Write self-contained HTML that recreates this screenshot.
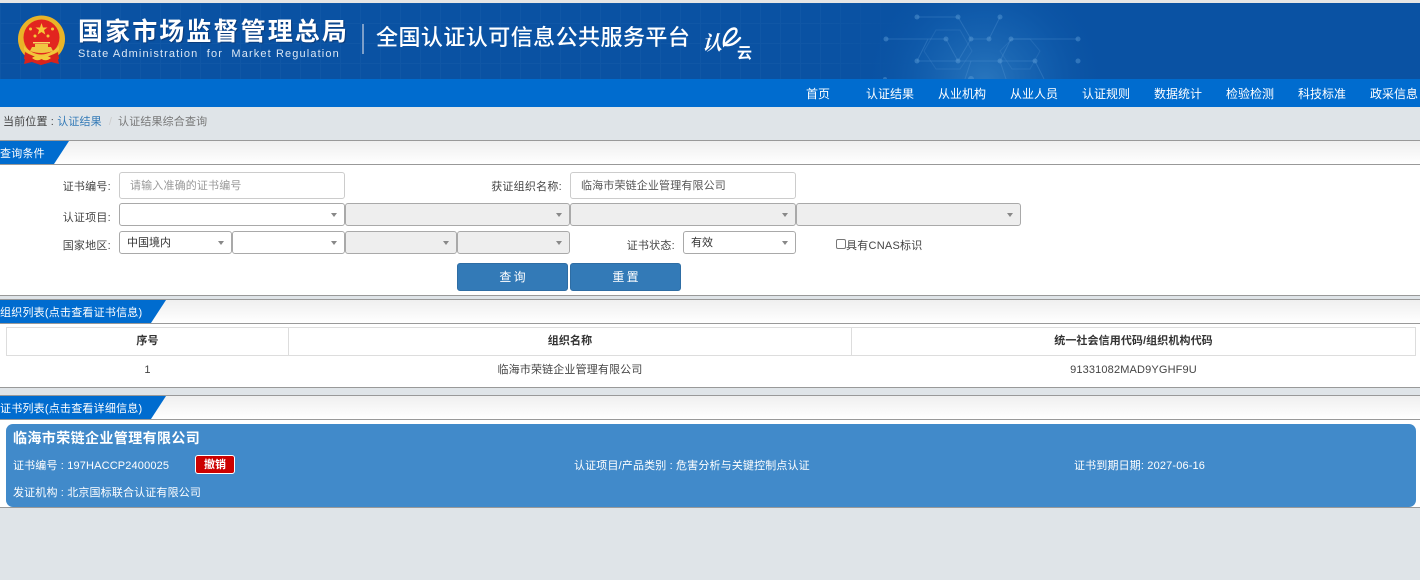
<!DOCTYPE html>
<html lang="zh"><head><meta charset="utf-8"><title>全国认证认可信息公共服务平台</title>
<style>
*{box-sizing:border-box}
html,body{margin:0;padding:0}
body{width:1420px;height:580px;overflow:hidden;position:relative;background:#dfe4e8;font:12px/16px "Liberation Sans","Noto Sans CJK SC",sans-serif;color:#333}
.a{position:absolute;white-space:nowrap}
.hdr{left:0;top:3px;width:1420px;height:76px;background:#0a52a3;overflow:hidden}
.top{left:0;top:0;width:1420px;height:3px;background:#e6e6e6}
.nav{left:0;top:79px;width:1420px;height:28px;background:#006ccf}
.n{top:86px;color:#fff;font-size:12px;line-height:16px;width:60px;text-align:center}
.panel{left:0;width:1420px;background:#fff;border-top:1px solid #999;border-bottom:1px solid #999}
.ttl{left:0;width:1420px;height:24px;background:linear-gradient(#efefef,#fff);border-bottom:1px solid #999}
.tag{left:0;height:23px;background:#006ccf;color:#fff;font-size:11px;letter-spacing:.22px;line-height:26px;clip-path:polygon(0 0,100% 0,calc(100% - 15px) 100%,0 100%)}
.l{font-size:11px;letter-spacing:.25px;color:#444;text-align:right}
.in{height:27px;background:#fff;border:1px solid #ccc;border-radius:3px;font-size:11px;letter-spacing:.15px;line-height:27px;padding-left:10px}
.s{height:23px;background:#fff;border:1px solid #a9a9a9;border-radius:3px;font-size:11px;line-height:22px;padding-left:7px;color:#333}
.s.d{background:#eee}
.s:after{content:"";position:absolute;right:7px;top:9px;border:3.500px solid transparent;border-top:4px solid #888;border-bottom:0}
.btn{height:28px;top:263px;width:111px;background:#337ab7;border:1px solid #2e6da4;border-radius:3px;color:#fff;text-align:center;line-height:27px;font-size:12px;word-spacing:-1px}
.th{top:327px;height:29px;border:1px solid #ddd;background:#fff;text-align:center;font-weight:bold;font-size:11px;letter-spacing:.1px;line-height:27px;color:#333}
.td{top:362px;text-align:center;font-size:11px;letter-spacing:.15px;color:#444}
.w{color:#fff;font-size:11px;letter-spacing:.15px}
</style></head><body>
<div class="a top"></div>
<div class="a hdr">
<svg width="1420" height="76" style="position:absolute;left:0;top:0">
<defs>
<pattern id="g" width="20" height="20" patternUnits="userSpaceOnUse"><path d="M0 .5H20M.5 0V20" stroke="#2a6cb5" stroke-opacity=".2" fill="none"/></pattern>
<radialGradient id="gl" cx="985" cy="80" r="125" gradientUnits="userSpaceOnUse"><stop offset="0" stop-color="#3f8fd0" stop-opacity=".6"/><stop offset=".55" stop-color="#1a6ab8" stop-opacity=".4"/><stop offset="1" stop-color="#0a52a3" stop-opacity="0"/></radialGradient>
<linearGradient id="fd" x1="0" x2="1" y1="0" y2="0"><stop offset="0" stop-color="#fff"/><stop offset=".58" stop-color="#fff"/><stop offset=".64" stop-color="#000"/></linearGradient>
<mask id="m"><rect width="1420" height="76" fill="url(#fd)"/></mask>
</defs>
<rect width="1420" height="76" fill="url(#g)" mask="url(#m)"/>
<rect width="1420" height="76" fill="url(#gl)"/>
<g fill="none" stroke="#5d9dd6" stroke-opacity=".3" stroke-width="1">
<path d="M917 14H958L971 36H989L1000 14M886 36H946M1011 36H1078M971 36L958 58H928M917 58L928 36M1000 14L989 36M1011 36L1000 58L1011 58H1035M971 58H958M1000 58H971"/>
<path d="M958 58L946 36M928 58L917 58M1035 58L1044 76M971 58L965 76M1000 58L1006 76"/>
<path d="M924 58L936 37H960L972 58L960 76H936Z" stroke-opacity=".2" transform="translate(0,-10)"/>
<path d="M1000 48L1012 36H1030L1040 48L1030 66H1012Z" stroke-opacity=".2"/>
</g>
<g fill="#5d9dd6" fill-opacity=".45"><circle cx="917" cy="14" r="2.500"/><circle cx="958" cy="14" r="2.500"/><circle cx="1000" cy="14" r="2.500"/><circle cx="886" cy="36" r="2.500"/><circle cx="946" cy="36" r="2.500"/><circle cx="971" cy="36" r="2.500"/><circle cx="989" cy="36" r="2.500"/><circle cx="1011" cy="36" r="2.500"/><circle cx="1078" cy="36" r="2.500"/><circle cx="917" cy="58" r="2.500"/><circle cx="958" cy="58" r="2.500"/><circle cx="971" cy="76" r="3"/><circle cx="1000" cy="58" r="2.500"/><circle cx="1035" cy="58" r="2.500"/><circle cx="1078" cy="58" r="2.500"/><circle cx="885" cy="76" r="2"/></g>
</svg>
</div>
<svg class="a" style="left:17px;top:15px" width="50" height="52" viewBox="0 0 50 52">
<path d="M10 36L7 49L15 47L24 50L34 47L42 49L39 36Z" fill="#d8231c"/>
<circle cx="24.500" cy="24" r="23.500" fill="#e9b428"/>
<circle cx="24.500" cy="22.500" r="18" fill="#e2251f"/>
<path d="M8 37Q24 47 41 37L42 44L34 47L24 50L15 47L7 44Z" fill="#d8231c"/>
<path d="M7 31Q24 48 42 31L42 35Q24 50 7 35Z" fill="#f2c53a"/>
<path d="M15 32H34L36 36Q24 40 13 36Z" fill="#f0c542"/><rect x="18" y="29" width="13" height="3" fill="#f0c542"/><rect x="16" y="27" width="17" height="1.500" fill="#f7d563"/>
<path d="M24.500 8L26 12.500H30.500L27 15L28.300 19.500L24.500 17L20.700 19.500L22 15L18.500 12.500H23Z" fill="#f6c836"/>
<g fill="#f6c836"><circle cx="13.500" cy="14" r="1.500"/><circle cx="35.500" cy="14" r="1.500"/><circle cx="18" cy="21" r="1.500"/><circle cx="31" cy="21" r="1.500"/></g>
<path d="M15 43Q20 39 24.500 42Q29 39 34 43Q29 47 24.500 44Q20 47 15 43Z" fill="#f4c93a"/>
</svg>
<div class="a" style="left:78px;top:15px;color:#fff;font-size:25px;line-height:34px;font-weight:bold;letter-spacing:2.100px;text-shadow:1px 1px 1px #0b3a78">国家市场监督管理总局</div>
<div class="a" style="left:78px;top:46px;color:#dbe7f4;font-size:11px;line-height:16px;letter-spacing:1.130px">State Administration&nbsp; for&nbsp; Market Regulation</div>
<div class="a" style="left:362px;top:24px;width:2px;height:30px;background:#7d9fc9"></div>
<div class="a" style="left:376px;top:22px;color:#fff;font-size:22px;line-height:32px;letter-spacing:.45px;font-weight:500">全国认证认可信息公共服务平台</div>
<div class="a" style="left:702px;top:31px;color:#fff;font-size:20px;line-height:26px;font-family:'Liberation Serif','Noto Serif CJK SC',serif;font-style:italic;font-weight:bold">认</div>
<svg class="a" style="left:722px;top:24px" width="30" height="24" viewBox="0 0 30 24"><path d="M2 21C1 14 6 5 12 4.500C16 4.500 15 10 10 14C7 17 3 20 2 21ZM3 21C9 22 14 19 18 14" fill="none" stroke="#fff" stroke-width="2.400" stroke-linecap="round"/></svg>
<div class="a" style="left:737px;top:45px;color:#fff;font-size:15px;line-height:17px;font-weight:bold">云</div>
<div class="a nav"></div>
<div class="a n" style="left:788px">首页</div><div class="a n" style="left:860px">认证结果</div><div class="a n" style="left:932px">从业机构</div><div class="a n" style="left:1004px">从业人员</div><div class="a n" style="left:1076px">认证规则</div><div class="a n" style="left:1148px">数据统计</div><div class="a n" style="left:1220px">检验检测</div><div class="a n" style="left:1292px">科技标准</div><div class="a n" style="left:1364px">政采信息</div>
<div class="a" style="left:3px;top:114px;font-size:11px;letter-spacing:.15px;color:#444">当前位置 : <span style="color:#337ab7">认证结果</span><span style="color:#ccc;margin:0 6px 0 7px">/</span><span style="color:#777">认证结果综合查询</span></div>

<div class="a panel" style="top:140px;height:156px"></div>
<div class="a ttl" style="top:141px"></div>
<div class="a tag" style="top:141px;width:69px">查询条件</div>
<div class="a l" style="left:40px;top:179px;width:71px">证书编号:</div>
<div class="a in" style="left:119px;top:172px;width:226px;color:#999">请输入准确的证书编号</div>
<div class="a l" style="left:470px;top:179px;width:92px">获证组织名称:</div>
<div class="a in" style="left:570px;top:172px;width:226px;color:#555">临海市荣链企业管理有限公司</div>
<div class="a l" style="left:40px;top:210px;width:71px">认证项目:</div>
<div class="a s" style="left:119px;top:203px;width:226px"></div>
<div class="a s d" style="left:345px;top:203px;width:225px"></div>
<div class="a s d" style="left:570px;top:203px;width:226px"></div>
<div class="a s d" style="left:796px;top:203px;width:225px"></div>
<div class="a l" style="left:40px;top:238px;width:71px">国家地区:</div>
<div class="a s" style="left:119px;top:231px;width:113px">中国境内</div>
<div class="a s" style="left:232px;top:231px;width:113px"></div>
<div class="a s d" style="left:345px;top:231px;width:112px"></div>
<div class="a s d" style="left:457px;top:231px;width:113px"></div>
<div class="a l" style="left:610px;top:238px;width:65px">证书状态:</div>
<div class="a s" style="left:683px;top:231px;width:113px">有效</div>
<div class="a" style="left:836px;top:239px;width:10px;height:10px;border:1px solid #777;border-radius:2px;background:#fff"></div>
<div class="a" style="left:846px;top:238px;font-size:11px;letter-spacing:.25px;color:#444">具有CNAS标识</div>
<div class="a btn" style="left:457px">查 询</div>
<div class="a btn" style="left:570px">重 置</div>

<div class="a panel" style="top:299px;height:89px"></div>
<div class="a ttl" style="top:300px"></div>
<div class="a tag" style="top:300px;width:166px">组织列表(点击查看证书信息)</div>
<div class="a th" style="left:6px;width:283px">序号</div>
<div class="a th" style="left:288px;width:564px">组织名称</div>
<div class="a th" style="left:851px;width:565px">统一社会信用代码/组织机构代码</div>
<div class="a td" style="left:6px;width:283px">1</div>
<div class="a td" style="left:288px;width:564px">临海市荣链企业管理有限公司</div>
<div class="a td" style="left:851px;width:565px">91331082MAD9YGHF9U</div>

<div class="a panel" style="top:395px;height:113px;border-bottom:0"></div>
<div class="a ttl" style="top:396px"></div>
<div class="a tag" style="top:396px;width:166px">证书列表(点击查看详细信息)</div>
<div class="a" style="left:6px;top:424px;width:1410px;height:83px;background:#418aca;border-radius:7px"></div>
<div class="a" style="left:0;top:507px;width:1420px;height:1px;background:#999"></div>
<div class="a" style="left:13px;top:429px;color:#fff;font-size:14px;letter-spacing:.4px;line-height:18px;font-weight:bold">临海市荣链企业管理有限公司</div>
<div class="a w" style="left:13px;top:458px">证书编号 : 197HACCP2400025</div>
<div class="a" style="left:195px;top:455px;width:40px;height:19px;background:#c00;border:1px solid #fff;border-radius:3px;color:#fff;font-size:11px;line-height:19px;text-align:center;font-weight:bold">撤销</div>
<div class="a w" style="left:574px;top:458px">认证项目/产品类别 : 危害分析与关键控制点认证</div>
<div class="a w" style="left:1074px;top:458px">证书到期日期: 2027-06-16</div>
<div class="a w" style="left:13px;top:485px">发证机构 : 北京国标联合认证有限公司</div>
</body></html>
